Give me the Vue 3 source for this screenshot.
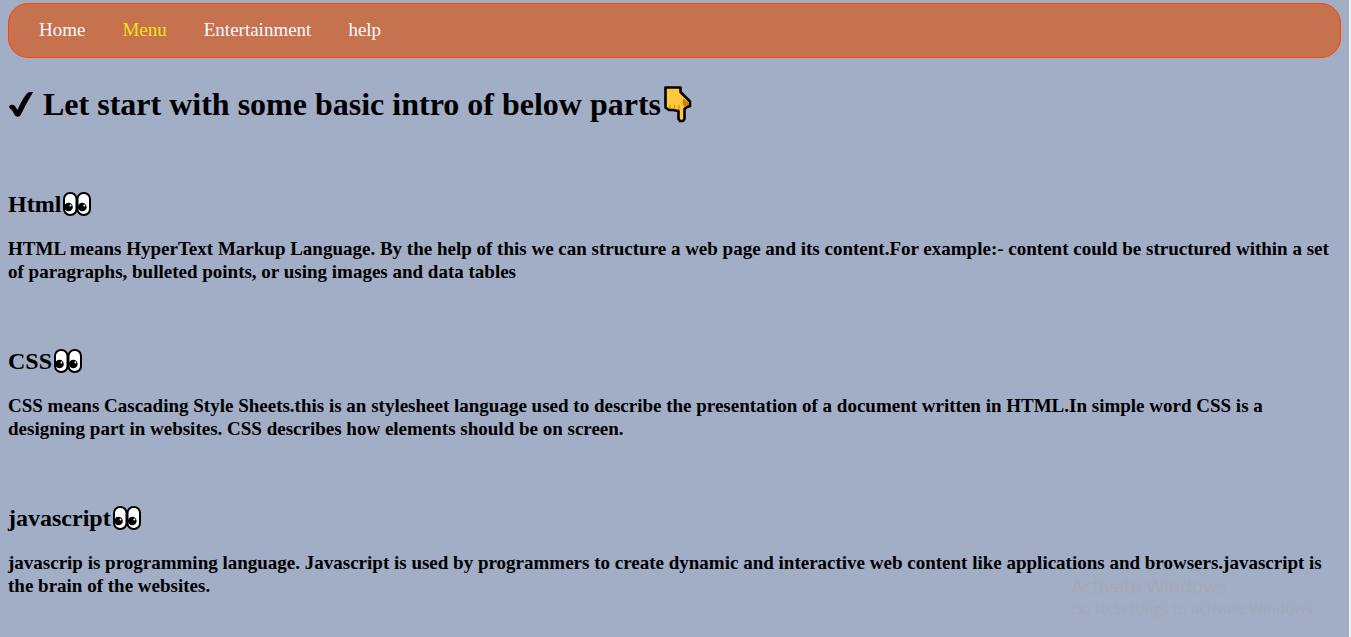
<script setup>
const links = [
  { label: 'Home', active: false },
  { label: 'Menu', active: true },
  { label: 'Entertainment', active: false },
  { label: 'help', active: false },
]

const topics = [
  {
    title: 'Html',
    text: 'HTML means HyperText Markup Language. By the help of this we can structure a web page and its content.For example:- content could be structured within a set of paragraphs, bulleted points, or using images and data tables',
  },
  {
    title: 'CSS',
    text: 'CSS means Cascading Style Sheets.this is an stylesheet language used to describe the presentation of a document written in HTML.In simple word CSS is a designing part in websites. CSS describes how elements should be on screen.',
  },
  {
    title: 'javascript',
    text: 'javascrip is programming language. Javascript is used by programmers to create dynamic and interactive web content like applications and browsers.javascript is the brain of the websites.',
  },
]
</script>

<template>
  <div class="page">
    <nav class="bar">
      <a v-for="link in links" :key="link.label" href="#" :class="{ active: link.active }">{{ link.label }}</a>
    </nav>

    <main>
      <h1>
        <svg class="check" viewBox="0 0 26 28" aria-hidden="true">
          <path d="M1 15.500C2 13.500 5 13 6.500 14.500L9.500 19C12.500 12 16 5.500 19.500 2C21 1 23 .8 25.200 1C21.500 7 17.500 14 13.500 22.500C12 26 9 26.500 7 24.500L4.500 20C3.500 18 1.500 18 1 15.500Z" />
        </svg>
        <span>Let start with some basic intro of below parts</span>
        <svg class="hand" viewBox="0 0 28 37" aria-hidden="true">
          <path d="M1.500 1.500H16.500V6L26 15.500V20L23 21L20.500 23V33L19 35H16L14.500 33V25L9 24H5L1.500 21.500Z" fill="#ffc83d" stroke="#000" stroke-width="2.600" stroke-linejoin="round" />
          <path d="M19 12.500L24 16V19L20.500 20.500L18.500 18Z" fill="#d67d00" />
          <path d="M6 19V23M10.500 19V23.500M15 19V24" fill="none" stroke="#d67d00" stroke-width="1" />
        </svg>
      </h1>

      <section v-for="topic in topics" :key="topic.title">
        <h2>
          <span>{{ topic.title }}</span>
          <svg class="eyes" viewBox="0 0 28 24" aria-hidden="true">
            <g fill="#fff" stroke="#000" stroke-width="2">
              <rect x="1" y="1" width="12.500" height="22" rx="6" />
              <rect x="14.500" y="1" width="12.500" height="22" rx="6" />
            </g>
            <circle cx="5.500" cy="15" r="4.300" />
            <circle cx="19.300" cy="15" r="4.300" />
            <circle cx="7.500" cy="13.500" r="1" fill="#fff" />
            <circle cx="21.300" cy="13.500" r="1" fill="#fff" />
          </svg>
        </h2>
        <p>{{ topic.text }}</p>
      </section>
    </main>

    <aside class="notice">
      <span class="notice-title">Activate Windows</span>
      <span>Go to Settings to activate Windows.</span>
    </aside>
  </div>
</template>

<style>
body {
  background: #a2adc6;
}
</style>

<style scoped>
.page {
  box-sizing: border-box;
  min-height: 100vh;
  padding: 3px 8px 0;
  border-right: 2px solid #f0f0f0;
  color: #000;
  font-family: "Liberation Serif", "Times New Roman", serif;
}

.bar {
  display: flex;
  gap: 37px;
  padding: 15px 30px 16px;
  border: 1px solid #ff4500;
  border-radius: 20px;
  background: #c6724f;
  font-size: 19px;
  line-height: 22px;
}

.bar a {
  color: #f8f8ff;
  text-decoration: none;
}

.bar a.active {
  color: #f5e11d;
}

h1,
h2 {
  display: flex;
  align-items: center;
}

h1 {
  margin: 28px 0 67px;
  font-size: 32px;
  line-height: 37px;
}

.check {
  width: 26px;
  height: 28px;
  margin-right: 9px;
}

.hand {
  width: 28px;
  height: 37px;
  margin-left: 3px;
}

section {
  margin-bottom: 64px;
}

section:last-child {
  margin-bottom: 0;
}

h2 {
  margin: 0 0 19px;
  font-size: 24px;
  line-height: 28px;
}

.eyes {
  width: 28px;
  height: 24px;
  margin-left: 2px;
}

p {
  margin: 0;
  font-size: 19px;
  font-weight: bold;
  line-height: 23px;
}

.notice {
  position: fixed;
  right: 34px;
  bottom: 19px;
  display: flex;
  flex-direction: column;
  color: #a4a9b5;
  font-family: "Open Sans", "Noto Sans", sans-serif;
  font-size: 15px;
  line-height: 20px;
}

.notice-title {
  font-size: 19px;
  line-height: 24px;
}
</style>
